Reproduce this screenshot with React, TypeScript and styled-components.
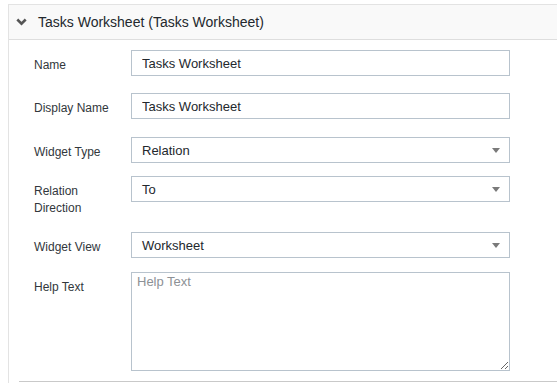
import React from "react";
import styled, { createGlobalStyle } from "styled-components";

const GlobalStyle = createGlobalStyle`
  html, body {
    margin: 0;
    padding: 0;
    background: #fff;
    font-family: "Liberation Sans", Arial, sans-serif;
    overflow: hidden;
  }
`;

const Panel = styled.section`
  margin: 4px -20px 0 8px;
  border: 1px solid #e3e3e3;
  border-bottom: none;
  background: #fff;
`;

const Header = styled.div`
  display: flex;
  align-items: center;
  height: 34px;
  padding-left: 7px;
  background: #f9f9f9;
  border-bottom: 1px solid #dedede;
`;

const Title = styled.h2`
  margin: 0 0 0 11px;
  font-size: 14px;
  font-weight: 400;
  color: #23282d;
`;

const Body = styled.div`
  padding: 10px 0 10px 25px;
`;

const Row = styled.div<{ $top?: number }>`
  display: flex;
  align-items: flex-start;
  margin-top: ${(p) => p.$top ?? 0}px;
`;

const Label = styled.label`
  width: 86px;
  margin-right: 11px;
  padding-top: 7px;
  font-size: 12px;
  line-height: 17px;
  color: #32373c;
`;

const Input = styled.input`
  box-sizing: border-box;
  width: 379px;
  height: 26px;
  margin: 0;
  padding: 0 10px;
  border: 1px solid #b8c3cd;
  border-radius: 0;
  font-family: inherit;
  font-size: 13px;
  color: #23282d;
  background: #fff;
  outline: none;
`;

const Select = styled.div`
  box-sizing: border-box;
  display: flex;
  align-items: center;
  justify-content: space-between;
  width: 379px;
  height: 26px;
  padding: 0 9px 0 10px;
  border: 1px solid #b8c3cd;
  font-size: 13px;
  color: #23282d;
  background: #fff;
`;

const Caret = styled.span`
  width: 0;
  height: 0;
  border-left: 4px solid transparent;
  border-right: 4px solid transparent;
  border-top: 5px solid #7a7a7a;
`;

const TextArea = styled.textarea`
  box-sizing: border-box;
  width: 379px;
  height: 99px;
  margin: 0;
  padding: 1px 5px;
  border: 1px solid #b8c3cd;
  border-radius: 0;
  font-family: inherit;
  font-size: 13px;
  line-height: 15px;
  color: #23282d;
  outline: none;
  &::placeholder {
    color: #8d9196;
  }
`;

const Divider = styled.div`
  margin: 0 0 0 10px;
  height: 1px;
  border-top: 1px solid #c9c9c9;
`;

const Chevron = () => (
  <svg width="11" height="8" viewBox="0 0 11 8">
    <path d="M1.3 1.5 L5.5 5.6 L9.7 1.5" fill="none" stroke="#555" strokeWidth="2.6" />
  </svg>
);

const SelectField = ({ value }: { value: string }) => (
  <Select>
    <span>{value}</span>
    <Caret />
  </Select>
);

const App = () => {
  return (
    <>
      <GlobalStyle />
      <Panel>
        <Header>
          <Chevron />
          <Title>Tasks Worksheet (Tasks Worksheet)</Title>
        </Header>
        <Body>
          <Row>
            <Label htmlFor="name">Name</Label>
            <Input id="name" defaultValue="Tasks Worksheet" />
          </Row>
          <Row $top={17}>
            <Label htmlFor="display_name">Display Name</Label>
            <Input id="display_name" defaultValue="Tasks Worksheet" />
          </Row>
          <Row $top={18}>
            <Label>Widget Type</Label>
            <SelectField value="Relation" />
          </Row>
          <Row $top={13}>
            <Label>Relation Direction</Label>
            <SelectField value="To" />
          </Row>
          <Row $top={15}>
            <Label>Widget View</Label>
            <SelectField value="Worksheet" />
          </Row>
          <Row $top={14}>
            <Label htmlFor="help_text">Help Text</Label>
            <TextArea id="help_text" placeholder="Help Text" />
          </Row>
        </Body>
        <Divider />
      </Panel>
    </>
  );
};

export default App;
